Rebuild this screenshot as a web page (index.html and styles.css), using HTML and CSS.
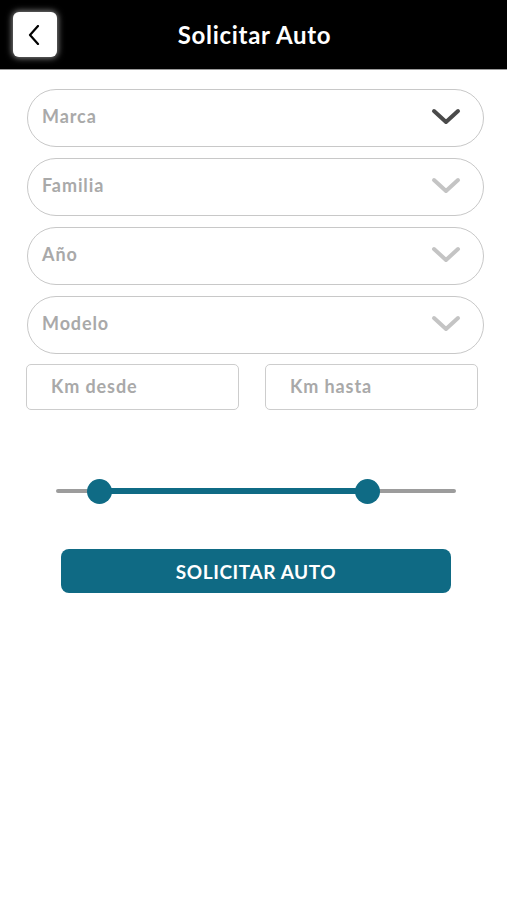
FILE: index.html
```html
<!DOCTYPE html>
<html lang="es">
<head>
    <meta charset="UTF-8">
    <meta name="viewport" content="width=device-width, initial-scale=1.0">
    <title>Solicitar Auto</title>
    <link rel="stylesheet" href="styles.css">
</head>
<body>
    <header class="topbar">
        <button class="back" type="button" aria-label="Volver">
            <svg width="12" height="20" viewBox="0 0 12 20"><path d="M10 1 L2 10 L10 19" fill="none" stroke="#000" stroke-width="2.2" stroke-linecap="round" stroke-linejoin="round"/></svg>
        </button>
        <h1 class="title">Solicitar Auto</h1>
    </header>

    <form class="form">
        <div class="select">
            <span class="placeholder">Marca</span>
            <svg class="chev active" width="30" height="18" viewBox="0 0 30 18"><path d="M3 3 L15 14 L27 3" fill="none" stroke-width="4" stroke-linecap="round" stroke-linejoin="round"/></svg>
        </div>
        <div class="select">
            <span class="placeholder">Familia</span>
            <svg class="chev" width="30" height="18" viewBox="0 0 30 18"><path d="M3 3 L15 14 L27 3" fill="none" stroke-width="4" stroke-linecap="round" stroke-linejoin="round"/></svg>
        </div>
        <div class="select">
            <span class="placeholder">Año</span>
            <svg class="chev" width="30" height="18" viewBox="0 0 30 18"><path d="M3 3 L15 14 L27 3" fill="none" stroke-width="4" stroke-linecap="round" stroke-linejoin="round"/></svg>
        </div>
        <div class="select">
            <span class="placeholder">Modelo</span>
            <svg class="chev" width="30" height="18" viewBox="0 0 30 18"><path d="M3 3 L15 14 L27 3" fill="none" stroke-width="4" stroke-linecap="round" stroke-linejoin="round"/></svg>
        </div>

        <div class="km-row">
            <div class="km">Km desde</div>
            <div class="km">Km hasta</div>
        </div>

        <div class="slider">
            <div class="track">
                <div class="range" style="left:10.75%;width:67%;"></div>
                <span class="thumb" style="left:10.75%;"></span>
                <span class="thumb" style="left:77.75%;"></span>
            </div>
        </div>

        <button class="submit" type="button">SOLICITAR AUTO</button>
    </form>
</body>
</html>
```

FILE: styles.css
```css
*{
    box-sizing: border-box;
    margin:0;
    padding:0;
}
body{
    font-family: Lato, "Noto Sans", sans-serif;
    background:#fff;
    width:507px;
}
.topbar{
    height:70px;
    background:#000;
    border-bottom:1px solid #9a9a9a;
    display:flex;
    align-items:center;
    padding-left:13px;
    position:relative;
}
.back{
    width:44px;
    height:45px;
    background:#fff;
    border:none;
    border-radius:6px;
    box-shadow:0 0 6px 1px rgba(255,255,255,.55);
    display:flex;
    align-items:center;
    justify-content:center;
}
.back svg{
    margin-right:2px;
}
.title{
    position:absolute;
    left:0;
    right:0;
    text-align:center;
    color:#fff;
    font-size:24px;
    font-weight:700;
    letter-spacing:.7px;
    margin-left:2px;
    pointer-events:none;
}
.form{
    padding:19px 23px 0 27px;
    display:flex;
    flex-direction:column;
}
.select{
    height:58px;
    width:457px;
    border:1.5px solid #c8c8c8;
    border-radius:29px;
    display:flex;
    align-items:center;
    justify-content:space-between;
    padding:0 22px 0 14px;
    margin-bottom:11px;
}
.placeholder{
    color:#a9a9a9;
    font-size:18px;
    font-weight:700;
    letter-spacing:.9px;
    margin-top:-4px;
}
.chev{
    stroke:#c4c4c4;
    margin-top:-2px;
}
.chev.active{
    stroke:#4a4a4a;
}
.km-row{
    display:flex;
    gap:26px;
    margin-left:-1px;
    margin-top:-1px;
}
.km{
    width:213px;
    height:46px;
    border:1.5px solid #cdcdcd;
    border-radius:5px;
    padding-left:24px;
    display:flex;
    align-items:center;
    color:#a9a9a9;
    font-size:18px;
    font-weight:700;
    letter-spacing:.9px;
    padding-bottom:3px;
}
.slider{
    padding:79px 0 0 29px;
}
.track{
    position:relative;
    width:400px;
    height:4px;
    background:#9c9c9c;
    border-radius:2px;
}
.range{
    position:absolute;
    top:-1px;
    height:6px;
    background:#0f6b85;
}
.thumb{
    position:absolute;
    top:2px;
    width:25px;
    height:25px;
    margin:-12.5px 0 0 -12.5px;
    border-radius:50%;
    background:#0f6b85;
}
.submit{
    margin:56px 0 0 34px;
    width:390px;
    height:44px;
    border:none;
    border-radius:8px;
    background:#0f6a84;
    color:#fff;
    font-family: Lato, "Noto Sans", sans-serif;
    font-size:19px;
    font-weight:700;
    letter-spacing:.6px;
}
```
